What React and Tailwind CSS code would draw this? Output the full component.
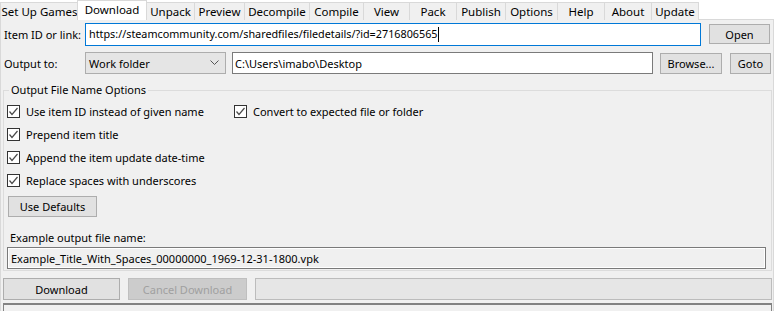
import React from "react";

const FONT = { fontFamily: '"Segoe UI", "Noto Sans", "Open Sans", sans-serif' };

const tabs = [
  ["Set Up Games", 79],
  ["Download", 68],
  ["Unpack", 49],
  ["Preview", 51],
  ["Decompile", 66],
  ["Compile", 55],
  ["View", 47],
  ["Pack", 48],
  ["Publish", 50],
  ["Options", 53],
  ["Help", 48],
  ["About", 48],
  ["Update", 48],
];

function Check({ label }) {
  return (
    <div className="flex items-center h-[23px]">
      <div className="w-[13px] h-[13px] border border-[#333333] bg-white flex items-center justify-center shrink-0">
        <svg width="11" height="11" viewBox="0 0 11 11">
          <polyline points="1.5,5.5 4,8.5 9.5,2" fill="none" stroke="#4a4a4a" strokeWidth="1.2" />
        </svg>
      </div>
      <span className="ml-[6px] text-black leading-none">{label}</span>
    </div>
  );
}

export default function App() {
  return (
    <div className="w-[776px] h-[311px] overflow-hidden bg-white text-[11px] text-black whitespace-nowrap" style={FONT}>
      {/* tab strip */}
      <div className="flex items-end h-[20px] relative z-10">
        {tabs.map(([t, w]) =>
          t === "Download" ? (
            <div
              key={t}
              className="h-[20px] bg-white border border-b-0 border-[#d9d9d9] flex items-center justify-center -mx-[1px] relative text-[11.5px]"
              style={{ width: w + 2 }}
            >
              <span className="leading-none -mt-[2px]">{t}</span>
            </div>
          ) : (
            <div
              key={t}
              className="h-[18px] bg-[#f0f0f0] border border-b-0 border-[#d9d9d9] -mr-[1px] flex items-center justify-center text-[11.5px]"
              style={{ width: w }}
            >
              <span className="leading-none">{t}</span>
            </div>
          )
        )}
      </div>
      {/* panel */}
      <div className="w-[774px] h-[300px] -mt-[1px] bg-[#f0f0f0] border border-[#d9d9d9] pl-[3px] pt-[3px]">
        {/* row 1 */}
        <div className="flex items-center h-[22px]">
          <div className="w-[81px] leading-none">Item ID or link:</div>
          <div className="w-[616px] h-[23px] bg-white border border-[#0078d7] flex items-center pl-[3px] leading-none text-[10.8px]">
            https://steamcommunity.com/sharedfiles/filedetails/?id=2716806565
            <span className="inline-block w-[1px] h-[15px] bg-black" />
          </div>
          <button className="ml-[8px] w-[61px] h-[20px] bg-[#e1e1e1] border border-[#adadad] leading-none">Open</button>
        </div>
        {/* row 2 */}
        <div className="flex items-center h-[22px] mt-[7px]">
          <div className="w-[81px] leading-none">Output to:</div>
          <div className="w-[141px] h-[22px] bg-[#e5e5e5] border border-[#adadad] flex items-center justify-between pl-[3px] pr-[6px]">
            <span className="leading-none">Work folder</span>
            <svg width="9" height="6" viewBox="0 0 9 6">
              <polyline points="0.5,0.5 4.5,4.5 8.5,0.5" fill="none" stroke="#555" strokeWidth="1" />
            </svg>
          </div>
          <div className="ml-[6px] w-[421px] h-[22px] bg-white border border-[#7a7a7a] flex items-center pl-[2px] leading-none">
            C:\Users\imabo\Desktop
          </div>
          <button className="ml-[7px] w-[62px] h-[21px] bg-[#e1e1e1] border border-[#adadad] leading-none">Browse...</button>
          <button className="ml-[8px] w-[41px] h-[21px] bg-[#e1e1e1] border border-[#adadad] leading-none">Goto</button>
        </div>
        {/* group */}
        <fieldset className="-ml-[1px] mt-[8px] w-[769px] h-[189px] border border-[#dcdcdc] pl-[3px] pr-[4px] pb-0">
          <legend className="ml-[2px] px-[2px] leading-[16px]">Output File Name Options</legend>
          <div className="flex mt-[2px]">
            <div className="w-[227px]">
              <Check label="Use item ID instead of given name" />
            </div>
            <Check label="Convert to expected file or folder" />
          </div>
          <Check label="Prepend item title" />
          <Check label="Append the item update date-time" />
          <Check label="Replace spaces with underscores" />
          <button className="mt-[4px] ml-[1px] w-[89px] h-[21px] bg-[#e1e1e1] border border-[#adadad] leading-none">Use Defaults</button>
          <div className="mt-[15px] ml-[3px] leading-none">Example output file name:</div>
          <div className="mt-[4px] w-[759px] h-[22px] bg-[#f0f0f0] border border-[#7a7a7a] flex items-center pl-[3px] leading-none shadow-[inset_1px_1px_0_#ffffff,inset_-1px_-1px_0_#ffffff]">
            Example_Title_With_Spaces_00000000_1969-12-31-1800.vpk
          </div>
        </fieldset>
        {/* bottom row */}
        <div className="flex items-center mt-[7px] -ml-[1px]">
          <button className="w-[117px] h-[22px] bg-[#e1e1e1] border border-[#adadad] leading-none">Download</button>
          <button className="ml-[8px] w-[119px] h-[22px] bg-[#cccccc] border border-[#bfbfbf] text-[#a0a0a0] leading-none">Cancel Download</button>
          <div className="ml-[8px] w-[517px] h-[22px] bg-[#e6e6e6] border border-[#bcbcbc]" />
        </div>
        <div className="mt-[3px] -ml-[1px] w-[769px] h-[20px] border-t-2 border-l border-r border-[#828282] bg-[#f0f0f0]" />
      </div>
    </div>
  );
}
